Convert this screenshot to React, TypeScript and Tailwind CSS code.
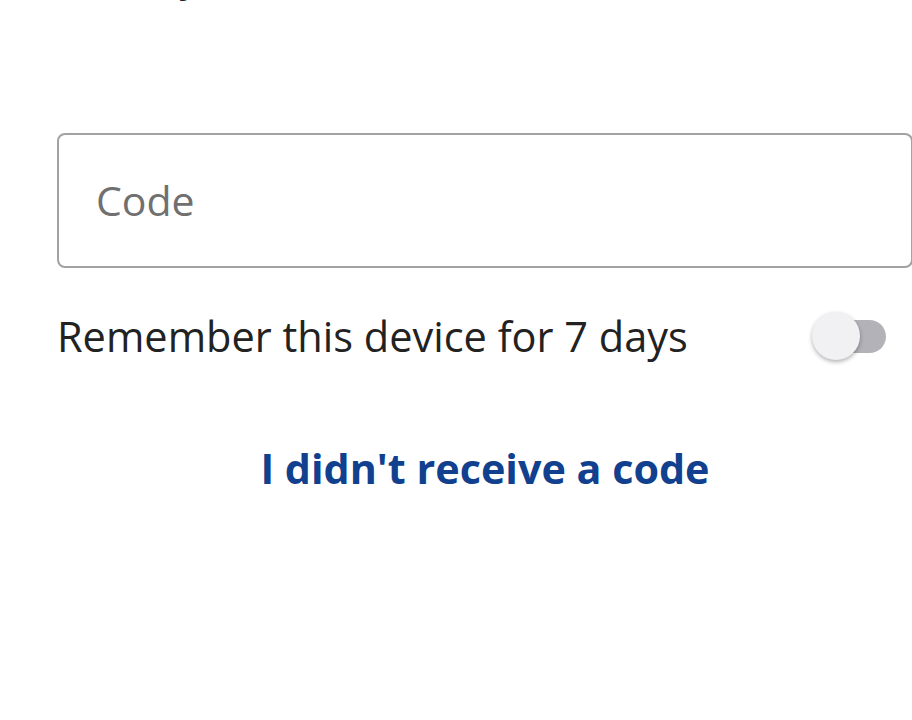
export default function App() {
  return (
    <div className="min-h-[720px] w-[912px] overflow-hidden bg-white font-['Open_Sans',sans-serif]">
      <div className="ml-[57px] w-[856px]">
        {/* cut-off line above the fold */}
        <p className="-mt-[52px] text-[40px] leading-[56px] text-[#222]">Check your email.</p>

        <div className="mt-[129px] flex h-[135px] items-center rounded-[8px] border-2 border-[#a2a2a2] pl-[37px]">
          <input
            placeholder="Code"
            className="w-full bg-transparent text-[41px] text-[#222] outline-none placeholder:text-[#707070]"
          />
        </div>

        <div className="mt-[40px] flex items-center justify-between pr-[27px]">
          <span className="text-[41.5px] leading-[56px] text-[#222]">Remember this device for 7 days</span>
          {/* switch, off */}
          <div className="relative h-[48px] w-[74px]">
            <div className="absolute right-0 top-[8px] h-[33px] w-[62px] rounded-full bg-[#b2b2b8]" />
            <div className="absolute left-0 top-0 h-[48px] w-[48px] rounded-full bg-[#f1f1f4] shadow-[0_2px_4px_rgba(0,0,0,0.3)]" />
          </div>
        </div>

        <div className="mt-[76px] text-center">
          <a href="#" className="text-[41.3px] font-bold leading-[56px] text-[#10408e]">
            I didn't receive a code
          </a>
        </div>
      </div>
    </div>
  );
}
